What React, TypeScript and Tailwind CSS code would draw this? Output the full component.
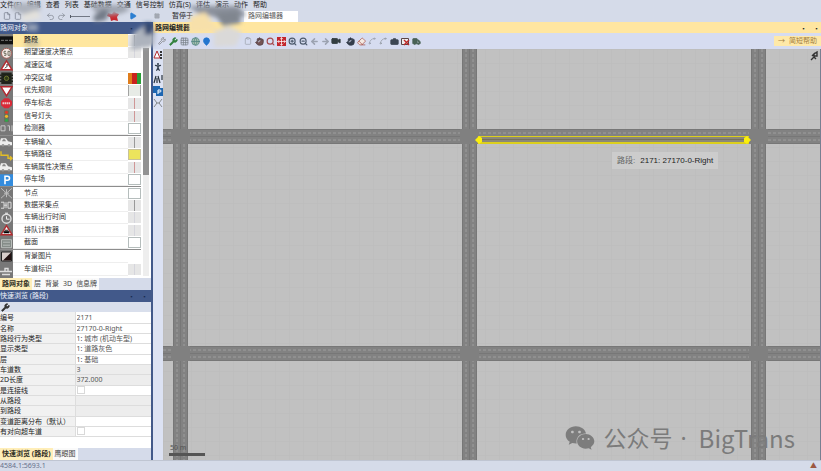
import { useState } from "react";
import type { ReactNode } from "react";
import {
  ArrowLeft,
  ArrowRight,
  Camera,
  Clipboard,
  Eraser,
  File,
  Globe,
  Grid3x3,
  Hand,
  MapPin,
  Move,
  PersonStanding,
  Play,
  Redo2,
  Search,
  Spline,
  Square,
  Truck,
  Undo2,
  Video,
  Wrench,
  ZoomIn,
  ZoomOut
} from "lucide-react";
import { FaWeixin } from "react-icons/fa";

type Swatch = "none" | "empty" | "line" | "red" | "blank" | "conflict" | "priority" | "yellow" | "link";

type NetworkObject = {
  name: string;
  icon: string;
  swatch: Swatch;
};

const menus = ["文件(F)", "编辑", "查看", "列表", "基础数据", "交通", "信号控制", "仿真(S)", "评估", "演示", "动作", "帮助"];

const groups: { className: string; items: NetworkObject[] }[] = [
  {
    className: "h-[101px]",
    items: [
      { name: "路段", icon: "link", swatch: "link" },
      { name: "期望速度决策点", icon: "speed", swatch: "blank" },
      { name: "减速区域", icon: "warning", swatch: "none" },
      { name: "冲突区域", icon: "conflict", swatch: "conflict" },
      { name: "优先规则", icon: "yield", swatch: "priority" },
      { name: "停车标志", icon: "stop", swatch: "red" },
      { name: "信号灯头", icon: "signal", swatch: "red" },
      { name: "检测器", icon: "detector", swatch: "empty" }
    ]
  },
  {
    className: "h-[51px] border-t border-[#8d8d8d]",
    items: [
      { name: "车辆输入", icon: "car", swatch: "line" },
      { name: "车辆路径", icon: "route", swatch: "yellow" },
      { name: "车辆属性决策点", icon: "car", swatch: "red" },
      { name: "停车场", icon: "parking", swatch: "empty" }
    ]
  },
  {
    className: "h-[63px] border-t border-[#8d8d8d]",
    items: [
      { name: "节点", icon: "node", swatch: "empty" },
      { name: "数据采集点", icon: "data", swatch: "line" },
      { name: "车辆出行时间", icon: "clock", swatch: "blank" },
      { name: "排队计数器", icon: "queue", swatch: "blank" },
      { name: "截面", icon: "section", swatch: "empty" }
    ]
  },
  {
    className: "h-[27px] border-t border-[#8d8d8d]",
    items: [
      { name: "背景图片", icon: "image", swatch: "none" },
      { name: "车道标识", icon: "lane", swatch: "blank" }
    ]
  }
];

const properties: { name: string; value?: string; kind?: "check" | "off" }[] = [
  { name: "编号", value: "2171" },
  { name: "名称", value: "27170-0-Right" },
  { name: "路段行为类型", value: "1: 城市 (机动车型)" },
  { name: "显示类型", value: "1: 道路灰色" },
  { name: "层", value: "1: 基础" },
  { name: "车道数", value: "3", kind: "off" },
  { name: "2D长度", value: "372.000", kind: "off" },
  { name: "是连接线", kind: "check" },
  { name: "从路段", kind: "off" },
  { name: "到路段", kind: "off" },
  { name: "变道距离分布（默认）" },
  { name: "有对向超车道", kind: "check" }
];

function ObjectIcon({ name }: { name: string }) {
  const shapes: Record<string, ReactNode> = {
    link: (
      <>
        <path d="M0 2h13v8H0z" fill="#111111" />
        <path d="M1 6h3M5 6h3M9 6h3" stroke="#777777" />
      </>
    ),
    speed: (
      <>
        <circle cx="6.5" cy="6" r="5" fill="#f3ebe6" stroke="#a6645c" />
        <path d="M6 4H4v2h2v2H4M8 4h2v4H8z" fill="none" stroke="#555544" strokeWidth=".8" />
      </>
    ),
    warning: (
      <>
        <path d="M6.5 1.5 12 10.5H1z" fill="#fff" stroke="#b22b2f" strokeWidth="1.4" />
        <path d="m5 9 2-2V5l1 1" fill="none" stroke="#222" />
      </>
    ),
    conflict: (
      <>
        <path d="M2 1h9v10H2z M0 3h13M0 6h13M0 9h13" fill="#171c13" stroke="#22251d" strokeWidth="1.5" />
        <circle cx="6.5" cy="6" r="2.2" fill="#303c18" stroke="#6c722d" />
      </>
    ),
    yield: <path d="M1 1.5h11L6.5 10.5z" fill="#fff" stroke="#b3252c" strokeWidth="1.4" />,
    stop: (
      <>
        <path d="M4.5 1h4L12 4v4l-3.5 3h-4L1 8V4z" fill="#d82937" />
        <path d="M2.5 6h8" stroke="#f0c9cb" strokeWidth="2" strokeDasharray="1.5 .5" />
      </>
    ),
    signal: (
      <>
        <path d="M4 0h5v12H4z" fill="#68705c" />
        <circle cx="6.5" cy="2" r="1.6" fill="#dd3a28" />
        <circle cx="6.5" cy="6" r="1.6" fill="#eeb526" />
        <circle cx="6.5" cy="10" r="1.6" fill="#31a64b" />
      </>
    ),
    detector: <path d="M1 3.5h4v5H1zM7.5 3.5h2v5M12 3v6" fill="none" stroke="#c8c8c8" />,
    car: (
      <>
        <path d="m0 5 1-3h5l2 3 4 1v3H0z" fill="#eeeeee" />
        <path d="m2 5 1-2h2l1 2z" fill="#888888" />
        <circle cx="3" cy="9" r="1.3" fill="#999999" />
        <circle cx="9" cy="9" r="1.3" fill="#999999" />
      </>
    ),
    route: <path d="M1 2v4h7v3h4M10 7l2 2-2 2" fill="none" stroke="#e3bd27" strokeWidth="1.4" />,
    parking: (
      <>
        <path d="M0 0h13v12H0z" fill="#348cdd" />
        <path d="M5 10V2h2.5a2 2 0 0 1 0 4H5" fill="none" stroke="#fff" strokeWidth="1.6" />
      </>
    ),
    node: <path d="m1 1 11 10M12 1 1 11M4 6h5M6.5 2v8" stroke="#bcbcbc" fill="none" />,
    data: <path d="M1 3h3v6H1M6 3v6M8 3h3v6H8zM4 6h3" fill="none" stroke="#ddd" />,
    clock: (
      <>
        <circle cx="6.5" cy="6.5" r="4.5" fill="#777" stroke="#ddd" strokeWidth="1.4" />
        <path d="M6.5 4v3h3M5 1h3" stroke="#eee" fill="none" />
      </>
    ),
    queue: (
      <>
        <path d="M6.5 1.5 12 10.5H1z" fill="#fff" stroke="#b22b2f" strokeWidth="1.4" />
        <path d="M4 9V7h5v2M5 6h3" stroke="#222" />
      </>
    ),
    section: <path d="M1.5 2.5h10v8h-10zM3 5h7M3 8h7" fill="#858c88" stroke="#b9bdba" />,
    image: (
      <>
        <path d="M1.5 1.5h10v9h-10z" fill="#d7cdca" stroke="#222" />
        <path d="m3 10 8-8v8z" fill="#221111" />
      </>
    ),
    lane: <path d="M0 8h12M5 8V5h3v3M2 11h8" fill="none" stroke="#ddd" strokeWidth="1.4" />
  };

  return (
    <svg viewBox="0 0 13 12" className="h-full w-[13px] shrink-0 bg-[#787878]" aria-hidden="true">
      {shapes[name]}
    </svg>
  );
}

function SwatchCell({ kind }: { kind: Swatch }) {
  if (kind === "none") return <span className="w-[13px]" />;
  if (kind === "empty") return <span className="h-[11px] w-[13px] border border-[#b5bdbc] bg-white" />;
  if (kind === "yellow") return <span className="h-[11px] w-[13px] border border-[#c8c29a] bg-[#ece45c]" />;
  if (kind === "conflict") {
    return (
      <span className="flex h-[11px] w-[13px]">
        <span className="flex-1 bg-[#df7d1c]" />
        <span className="flex-1 bg-[#c9221d]" />
        <span className="flex-1 bg-[#299e36]" />
      </span>
    );
  }
  return (
    <span
      className={`flex h-[11px] w-[13px] justify-center ${
        kind === "priority" ? "border-x border-[#a2a2a2] bg-[#e7ebe6]" : "bg-[#e6e6e6]"
      }`}
    >
      {kind === "red" && <span className="w-px bg-[#cf9696]" />}
      {kind === "line" && <span className="w-px bg-[#999999]" />}
      {kind === "blank" && <span className="w-px bg-[#d5d5dc]" />}
      {kind === "link" && <span className="w-px bg-[#777777]" />}
    </span>
  );
}

function PanelHeader({ title }: { title: string }) {
  return (
    <div className="flex h-3 shrink-0 items-center justify-between bg-[#42598a] pr-1 text-[#eef2fa]">
      <h2 className="whitespace-nowrap">{title}</h2>
      <div className="flex gap-2 text-[5px] text-[#17294f]">
        <button type="button" aria-label="固定">▪</button>
        <button type="button" aria-label="关闭">▪</button>
      </div>
    </div>
  );
}

function Tabs({ items }: { items: string[] }) {
  const [active, setActive] = useState(items[0]);
  return (
    <div className="flex h-3 shrink-0 bg-[#d5dbea]">
      {items.map((item) => (
        <button
          key={item}
          type="button"
          onClick={() => setActive(item)}
          className={`whitespace-nowrap px-[2px] ${active === item ? "bg-[#ffeeb8] font-bold text-[#302d24]" : "bg-[#fafafa] text-[#444444]"}`}
        >
          {item}
        </button>
      ))}
    </div>
  );
}

function Tool({ label, children }: { label: string; children: ReactNode }) {
  return (
    <button type="button" aria-label={label} className="flex w-[10px] shrink-0 items-center justify-center">
      {children}
    </button>
  );
}

function NetworkMap() {
  return (
    <svg viewBox="0 0 658 411" preserveAspectRatio="xMinYMin slice" className="h-full w-full" aria-label="路网">
      <defs>
        <pattern id="grid" width="14" height="14" patternUnits="userSpaceOnUse">
          <path d="M0 0H14M0 0V14" stroke="#bbbbbb" fill="none" />
        </pattern>
        <pattern id="laneH" width="5" height="15" patternUnits="userSpaceOnUse">
          <path d="M0 4h3M0 11h3" stroke="#9d9d9d" />
        </pattern>
        <pattern id="laneV" width="15" height="5" patternUnits="userSpaceOnUse">
          <path d="M4 0v3M11 0v3" stroke="#9d9d9d" />
        </pattern>
      </defs>
      <rect width="658" height="411" fill="#c1c1c1" />
      <rect width="658" height="411" fill="url(#grid)" />
      {[10, 299, 588].map((x) => (
        <g key={x} transform={`translate(${x} 0)`}>
          <rect width="15" height="411" fill="#828282" />
          <rect width="15" height="411" fill="url(#laneV)" />
          <path d="M.5 0v411M7.5 0v411M14.5 0v411" stroke="#777777" />
        </g>
      ))}
      {[80, 297].map((y) => (
        <g key={y} transform={`translate(0 ${y})`}>
          <rect width="658" height="15" fill="#828282" />
          <rect width="658" height="15" fill="url(#laneH)" />
          <path d="M0 .5h658M0 7.5h658M0 14.5h658" stroke="#777777" />
          {[10, 299, 588].map((x) => (
            <path key={x} d={`M${x - 2} 0h19v15h-19z`} fill="#808080" />
          ))}
        </g>
      ))}
      <path d="M315 87h271v8H315z" fill="#8b8878" />
      <path d="M315 87h271v1H315zM315 93h271v2H315z" fill="#dccf1c" />
      <path d="M319 90h263v1H319z" fill="#77725a" />
      <path d="m312 91 4-4 3 2v4l-3 2z M588 91l-4-4-3 2v4l3 2z" fill="#fbef0c" />
      <path d="M6 405.5h36" stroke="#555555" strokeWidth="3" />
    </svg>
  );
}

function PrivacyPatches() {
  return (
    <svg className="pointer-events-none absolute left-0 top-0 h-[52px] w-[320px]" viewBox="0 0 320 52" aria-hidden="true">
      <defs>
        <filter id="soft" x="-30%" y="-30%" width="160%" height="160%">
          <feGaussianBlur stdDeviation="2" />
        </filter>
      </defs>
      <g filter="url(#soft)">
        <path d="M12 3h28v8l-14 4-14-5z" fill="#aeb3bd" />
        <path d="m22 15 15-5 4 8-18 4z" fill="#e3e1dc" />
        <path d="M27 24h11v7H27z" fill="#94a0b6" />
        <path d="M90 5h34l6 5-10 4-22 2z" fill="#a0a6b1" />
        <path d="m93 17 10-8 6 2-3 9-11 2z" fill="#737b88" />
        <path d="M25 40h14v7H25z" fill="#b9b39d" opacity=".7" />
        <path d="m133 33 10-7 12 4-1 16-23 4z" fill="#adb3bd" />
        <path d="m144 23 8 0 1 11-8 1z" fill="#31476f" />
        <path d="M188 6h50l8 9-14 6-34-8z" fill="#8c929d" />
        <path d="m190 17 15-5 14 19-30 1z" fill="#f7e0aa" />
        <path d="m214 32 14-6 14 6-6 14-22 1z" fill="#dad9d8" />
        <path d="m214 13 24-2 3 12-18 3z" fill="#80868f" />
      </g>
    </svg>
  );
}

export default function App() {
  const [selected, setSelected] = useState("路段");
  const [view, setView] = useState("路网编辑器");
  const [checks, setChecks] = useState<Record<string, boolean>>({});

  return (
    <div className="relative flex h-screen flex-col overflow-hidden bg-[#d5dbe9] font-['Noto_Sans','Noto_Sans_CJK_SC',sans-serif] text-[7px] leading-[10px] text-[#222222]">
      <nav className="flex h-[10px] shrink-0 gap-[5px] whitespace-nowrap">
        {menus.map((menu) => (
          <button key={menu} type="button">
            {menu}
          </button>
        ))}
      </nav>

      <div className="flex h-3 shrink-0 items-center pl-[2px]">
        <div className="flex gap-px">
          <Tool label="新建"><File size={8} color="#6f7685" /></Tool>
          <Tool label="打开"><File size={8} color="#6f7685" /></Tool>
        </div>
        <div className="ml-[22px] flex gap-px">
          <Tool label="撤销"><Undo2 size={9} color="#858b96" /></Tool>
          <Tool label="重做"><Redo2 size={9} color="#858b96" /></Tool>
        </div>
        <input
          type="range"
          aria-label="仿真速度"
          defaultValue={0}
          className="ml-1 h-px w-5 appearance-none bg-[#727885] [&::-webkit-slider-thumb]:h-[3px] [&::-webkit-slider-thumb]:w-px [&::-webkit-slider-thumb]:appearance-none [&::-webkit-slider-thumb]:bg-[#555b66]"
        />
        <div className="ml-[18px] flex gap-[10px]">
          <Tool label="微观仿真">
            <svg viewBox="0 0 12 12" className="size-[12px] shrink-0">
              <path d="m1 3 4 1 2-3 2 2 3 1-2 3 1 4-4-1-3 1-1-4-3-1z" fill="#c9262d" />
            </svg>
          </Tool>
          <Tool label="开始"><Play size={8} fill="#2c7fd1" color="#2c7fd1" /></Tool>
        </div>
        <div className="ml-[14px] flex">
          <Tool label="停止"><Square size={6} fill="#a3a8b2" color="#a3a8b2" /></Tool>
        </div>
        <label htmlFor="view" className="ml-[10px] w-[72px] whitespace-nowrap">暂停于</label>
        <select
          id="view"
          value={view}
          onChange={(e) => setView(e.target.value)}
          className="h-[11px] w-[54px] appearance-none bg-white pl-1 leading-[10px] text-[#555555]"
        >
          <option>路网编辑器</option>
          <option>列表</option>
        </select>
      </div>

      <div className="flex min-h-0 flex-1">
        <aside className="flex w-[153px] shrink-0 flex-col border-r-2 border-[#42598a] bg-white">
          <PanelHeader title="路网对象" />
          <div className="flex shrink-0">
            <div className="min-w-0 flex-1">
              {groups.map((group) => (
                <ul key={group.items[0].name} className={`grid auto-rows-fr ${group.className}`}>
                  {group.items.map((item) => (
                    <li key={item.name} className="flex min-h-0">
                      <button
                        type="button"
                        onClick={() => setSelected(item.name)}
                        className="flex min-h-0 w-full items-center overflow-hidden text-left leading-[10px]"
                      >
                        <ObjectIcon name={item.icon} />
                        <span
                          className={`flex h-full flex-1 items-center whitespace-nowrap pl-[11px] ${
                            selected === item.name ? "bg-[#ffe7a0] font-bold" : "border-b border-[#eeeeee] text-[#333333]"
                          }`}
                        >
                          {item.name}
                        </span>
                        <SwatchCell kind={item.swatch} />
                      </button>
                    </li>
                  ))}
                </ul>
              ))}
            </div>
            <div className="mx-[2px] w-[6px] bg-[#eeeeee] pt-[14px]">
              <div className="h-[127px] bg-[#929292]" />
            </div>
          </div>
          <div className="h-[2px] w-[13px] shrink-0 bg-[#787878]" />
          <Tabs items={["路网对象", "层", "背景", "3D", "信息牌"]} />

          <PanelHeader title="快速浏览 (路段)" />
          <div className="flex h-[10px] shrink-0 items-center bg-[#d9dfec]">
            <Tool label="设置"><Wrench size={9} fill="#333333" color="#333333" /></Tool>
          </div>
          <table className="w-full table-fixed border-collapse">
            <tbody>
              {properties.map((property, index) => (
                <tr key={property.name} className={index % 3 === 0 ? "h-[11px]" : "h-[10px]"}>
                  <th className="w-[75px] whitespace-nowrap border-b border-[#dddddd] bg-[#f1f1f1] p-0 text-left font-normal leading-[9px]">
                    <label htmlFor={`property-${index}`}>{property.name}</label>
                  </th>
                  <td
                    className={`border-b border-l border-[#dddddd] p-0 pl-px leading-[9px] text-[#555555] ${
                      property.kind === "off" ? "bg-[#ededed]" : "bg-white"
                    }`}
                  >
                    {property.kind === "check" ? (
                      <input
                        id={`property-${index}`}
                        type="checkbox"
                        checked={checks[property.name] ?? false}
                        onChange={(e) => setChecks({ ...checks, [property.name]: e.target.checked })}
                        className="block size-[8px] appearance-none border border-[#d9d9d9] bg-white checked:bg-[#42598a]"
                      />
                    ) : (
                      <input
                        id={`property-${index}`}
                        defaultValue={property.value}
                        readOnly={property.kind === "off"}
                        className="block h-[9px] w-full leading-[9px] outline-none"
                      />
                    )}
                  </td>
                </tr>
              ))}
            </tbody>
          </table>
          <div className="flex-1" />
          <Tabs items={["快速浏览 (路段)", "鹰眼图"]} />
        </aside>

        <main className="flex min-w-0 flex-1 flex-col">
          <div className="flex h-[11px] shrink-0 items-center justify-between bg-[#ffe6a0] px-[2px]">
            <h1 className="whitespace-nowrap font-bold">路网编辑器</h1>
            <div className="flex gap-2 text-[5px]">
              <button type="button" aria-label="固定窗口">▪</button>
              <button type="button" aria-label="关闭窗口">▪</button>
            </div>
          </div>
          <div className="flex h-4 shrink-0 items-center bg-[#d6dcf0] pl-1">
            <div className="flex gap-px">
              <Tool label="显示"><Wrench size={8} color="#777777" /></Tool>
              <Tool label="图形参数"><Wrench size={9} fill="#32813e" color="#32813e" /></Tool>
              <Tool label="网格"><Grid3x3 size={9} color="#777f87" /></Tool>
              <Tool label="地图"><Globe size={9} fill="#a3bfae" color="#4d8180" /></Tool>
              <Tool label="定位"><MapPin size={9} fill="#2476cf" color="#2476cf" /></Tool>
            </div>
            <div className="ml-[32px] flex gap-px">
              <Tool label="复制"><Clipboard size={8} color="#9ba0aa" /></Tool>
              <Tool label="平移"><Hand size={9} fill="#755454" color="#4e3b40" /></Tool>
              <Tool label="缩放"><Search size={9} strokeWidth={3} color="#a74a4e" /></Tool>
              <Tool label="显示整个路网">
                <span className="flex size-[9px] items-center justify-center bg-[#c3262d]"><Move size={9} color="#ffffff" /></span>
              </Tool>
              <Tool label="放大"><ZoomIn size={9} strokeWidth={3} color="#4c596c" /></Tool>
              <Tool label="缩小"><ZoomOut size={9} strokeWidth={3} color="#4c596c" /></Tool>
              <Tool label="后退"><ArrowLeft size={9} strokeWidth={4} color="#9ca2b1" /></Tool>
              <Tool label="前进"><ArrowRight size={9} strokeWidth={4} color="#9ca2b1" /></Tool>
              <Tool label="视角"><Video size={10} fill="#333d41" color="#333d41" /></Tool>
            </div>
            <div className="ml-1 flex gap-px">
              <Tool label="旋转"><Hand size={9} fill="#333c4b" color="#333c4b" /></Tool>
              <Tool label="擦除"><Eraser size={9} fill="#f3e9e2" color="#a75249" /></Tool>
              <Tool label="编辑线形"><Spline size={8} color="#9299a5" /></Tool>
              <Tool label="路径"><Spline size={8} color="#8e949c" /></Tool>
              <Tool label="截图"><Camera size={9} fill="#3d4753" color="#3d4753" /></Tool>
              <Tool label="清除路径">
                <svg viewBox="0 0 9 9" className="size-[9px]">
                  <path d="M.5 1.5h7v6h-7z" fill="#eeeeee" stroke="#5a4646" />
                  <path d="m3 3 5 5M8 3 3 8" stroke="#bd2929" strokeWidth="1.4" />
                </svg>
              </Tool>
              <Tool label="车辆"><Truck size={9} fill="#496155" color="#496155" /></Tool>
            </div>
            <button type="button" className="ml-auto flex h-[10px] items-center gap-1 whitespace-nowrap bg-[#ffe9a8] px-1 text-[#a07c42]">
              <span>→</span>简短帮助
            </button>
          </div>
          <div className="flex min-h-0 flex-1">
            <div className="flex w-[10px] shrink-0 flex-col items-center gap-[2px] bg-[#dce2f3] pt-px">
              <Tool label="车辆显示">
                <svg viewBox="0 0 10 10" className="size-[10px]">
                  <path d="M4 1 7 8H1z" fill="#ffffff" stroke="#b42c31" />
                  <path d="M8 1v8" stroke="#333333" strokeWidth="2" strokeDasharray="2 1" />
                </svg>
              </Tool>
              <Tool label="行人显示"><PersonStanding size={10} strokeWidth={3} color="#34404f" /></Tool>
              <Tool label="道路显示">
                <svg viewBox="0 0 10 10" className="size-[10px]">
                  <path d="m1 9 2-7M7 9 5 2M4 4v5M9 1v5" stroke="#27313b" strokeWidth="1.2" />
                </svg>
              </Tool>
              <Tool label="停车显示">
                <svg viewBox="0 0 10 10" className="size-[10px]">
                  <path d="M0 0h7v2h3v8H3V7H0z" fill="#1d66b1" />
                  <path d="M5 8V4h2a1 1 0 0 1 0 2H5" fill="none" stroke="#ffffff" />
                </svg>
              </Tool>
              <Tool label="节点显示">
                <svg viewBox="0 0 10 10" className="size-[10px]">
                  <path d="m1 1 3 4-3 4M9 1 6 5l3 4M3 5h4" stroke="#85898d" fill="none" />
                </svg>
              </Tool>
            </div>
            <div className="relative min-w-0 flex-1 overflow-hidden border-r border-[#777f91]">
              <NetworkMap />
              <span className="absolute bottom-[7px] left-[7px] text-[#555555]">50 m</span>
              <svg viewBox="0 0 8 10" className="absolute right-[2px] top-[2px] h-[10px] w-[8px]" aria-label="方向">
                <path d="m1 9 3-3V3L2 5M4 3l3-2v4H4M4 6l2 2" stroke="#333333" fill="none" strokeWidth="1.4" />
              </svg>
              <div role="tooltip" className="absolute left-[449px] top-[103px] flex h-[17px] items-center gap-[5px] whitespace-nowrap bg-[#cccccc] px-[5px] font-['Liberation_Sans','Noto_Sans_CJK_SC',sans-serif] text-[8px]">
                <span className="text-[#666666]">路段:</span>
                <span>2171: 27170-0-Right</span>
              </div>
              <div className="absolute bottom-[7px] right-[25px] flex items-center gap-2 whitespace-nowrap font-['Noto_Sans','Noto_Sans_CJK_SC',sans-serif] text-[23px] leading-[28px] text-[#7b7b7b]">
                <FaWeixin size={30} color="#7d7d7d" />
                <span>公众号</span>
                <span className="mr-1">·</span>
                <span className="font-['Noto_Sans_CJK_SC',sans-serif] text-[24px]">BigTrans</span>
              </div>
            </div>
          </div>
        </main>
      </div>

      <footer className="flex h-[11px] shrink-0 items-center justify-between border-t border-[#bfc5d2] pr-1 text-[#67718b]">
        <span>4584.1:5693.1</span>
        <span className="text-[#9c5842]">▲</span>
      </footer>
      <PrivacyPatches />
    </div>
  );
}
